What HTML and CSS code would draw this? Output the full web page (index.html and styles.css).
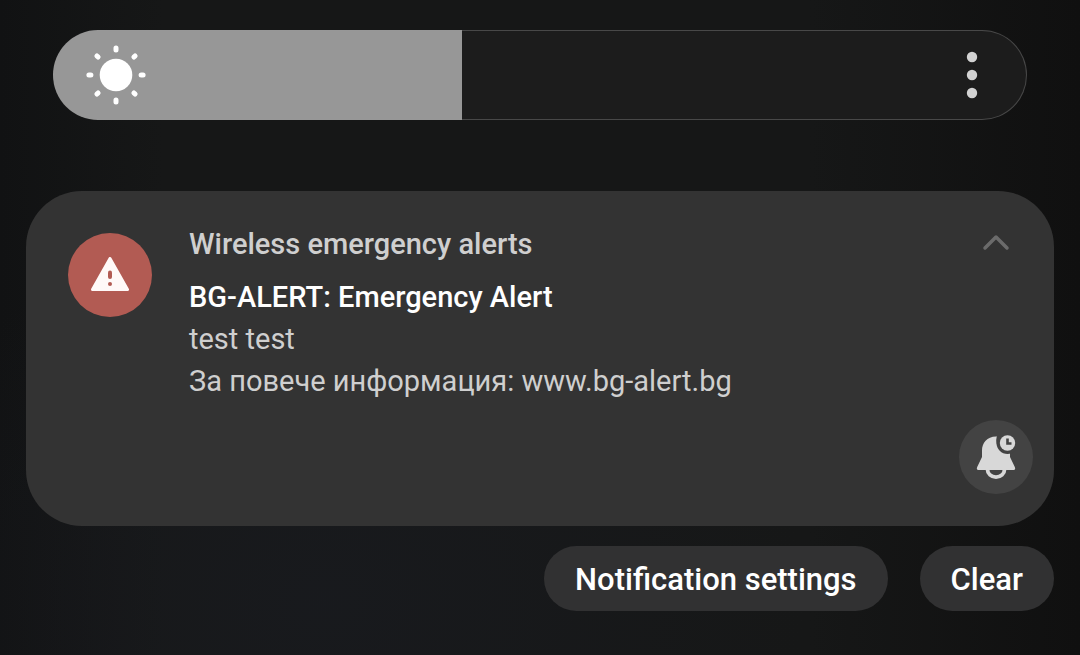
FILE: index.html
```html
<!DOCTYPE html>
<html lang="en">
<head>
  <meta charset="UTF-8">
  <meta name="viewport" content="width=device-width, initial-scale=1.0">
  <title>Notification panel</title>
  <link rel="stylesheet" href="styles.css">
</head>
<body>
  <main class="panel">
    <div class="brightness">
      <input type="range" class="brightness-slider" min="0" max="100" value="42" aria-label="Brightness">
      <svg class="sun-icon" width="60" height="60" viewBox="0 0 60 60" aria-hidden="true">
        <circle cx="30" cy="30" r="16.3" fill="#fff"/>
        <g stroke="#fff" stroke-width="5" stroke-linecap="round">
          <path d="M30 2.900v2M30 55.100v2M2.900 30h2M55.100 30h2"/>
          <path d="M10.900 10.900l1.200 1.200M47.900 47.900l1.200 1.200M10.900 49.100l1.200-1.200M47.900 12.100l1.200-1.200"/>
        </g>
      </svg>
      <button type="button" class="more-button" aria-label="More options">
        <svg width="12" height="48" viewBox="0 0 12 48" fill="#d2d2d2">
          <circle cx="6" cy="6" r="5.200"/>
          <circle cx="6" cy="24" r="5.200"/>
          <circle cx="6" cy="42" r="5.200"/>
        </svg>
      </button>
    </div>

    <article class="notification">
      <div class="app-icon">
        <svg width="40" height="36" viewBox="0 0 40 36" aria-hidden="true">
          <path d="M20 1.500L37.500 32.500H2.500Z" fill="#fff9f8" stroke="#fff9f8" stroke-width="3" stroke-linejoin="round"/>
          <path d="M20 15.500v4.500" stroke="#b25b53" stroke-width="4" stroke-linecap="round"/>
          <circle cx="20" cy="27" r="2" fill="#b25b53"/>
        </svg>
      </div>

      <div class="notification-text">
        <p class="app-name">Wireless emergency alerts</p>
        <h2 class="title">BG-ALERT: Emergency Alert</h2>
        <p class="message">test test</p>
        <p class="message" lang="bg">За повече информация: www.bg-alert.bg</p>
      </div>

      <button type="button" class="collapse-button" aria-label="Collapse">
        <svg width="28" height="18" viewBox="0 0 28 18" fill="none">
          <path d="M3 14L14 3L25 14" stroke="#6b6b6b" stroke-width="3.500" stroke-linecap="round" stroke-linejoin="round"/>
        </svg>
      </button>

      <button type="button" class="snooze-button" aria-label="Snooze">
        <svg width="40" height="46" viewBox="0 0 40 46">
          <path d="M20 2.500C11 2.500 6 9 6 16.500V23L1.200 33C.4 34.700.9 36 2.500 36H37.500C39.100 36 39.600 34.700 38.800 33L34 23V2.500Z" fill="#d8d8d8"/>
          <path d="M11.500 35.500a8.500 7.700 0 0 0 17 0" fill="none" stroke="#d8d8d8" stroke-width="3.800"/>
          <path d="M22 0H40V18H34A12 12 0 0 1 22 0Z" fill="#434343"/>
          <circle cx="31.500" cy="9" r="11" fill="#434343"/>
          <circle cx="31.500" cy="9" r="7.700" fill="#d8d8d8"/>
          <path d="M31.500 4.500V9.500H35.500" fill="none" stroke="#434343" stroke-width="2.600"/>
        </svg>
      </button>
    </article>

    <footer class="actions">
      <button type="button" class="pill">Notification settings</button>
      <button type="button" class="pill">Clear</button>
    </footer>
  </main>
</body>
</html>
```
FILE: styles.css
```css
* {
  box-sizing: border-box;
}

body {
  margin: 0;
  min-height: 100vh;
  font-family: Roboto, sans-serif;
  color: #fff;
  background:
    radial-gradient(ellipse at 30% 92%, rgba(25, 27, 32, 0.7), transparent 45%),
    linear-gradient(to right, #111213, #161717 15%, #161717 75%, #101010);
}

button {
  font-family: inherit;
  color: inherit;
  border: none;
  padding: 0;
  background: none;
  cursor: pointer;
}

svg {
  display: block;
}

.panel {
  padding: 30px 26px 44px;
}

/* Brightness bar */
.brightness {
  position: relative;
  margin: 0 27px 71px;
}

.brightness-slider {
  -webkit-appearance: none;
  appearance: none;
  display: block;
  width: 100%;
  height: 90px;
  margin: 0;
  border: 1px solid transparent;
  border-radius: 45px;
  /* the outline only shows on the unfilled part */
  background:
    linear-gradient(to right, #979797 42%, #1c1c1c 42%) padding-box,
    linear-gradient(to right, #979797 42%, #484848 42%) border-box;
}

.brightness-slider::-webkit-slider-thumb {
  -webkit-appearance: none;
  width: 1px;
  height: 88px;
}

.sun-icon {
  position: absolute;
  left: 33px;
  top: 15px;
  pointer-events: none;
}

.more-button {
  position: absolute;
  right: 49px;
  top: 21px;
}

/* Notification card */
.notification {
  display: grid;
  grid-template-columns: 84px 1fr 74px;
  row-gap: 18px;
  padding: 32px 21px 32px 42px;
  border-radius: 56px;
  background-color: #333333;
}

.app-icon {
  display: flex;
  align-items: center;
  justify-content: center;
  height: 84px;
  margin-top: 10px;
  border-radius: 50%;
  background-color: #b25b53;
}

.notification-text {
  padding-left: 37px;
  font-size: 29px;
  line-height: 42px;
  color: #cfcfcf;
}

.notification-text p,
.title {
  margin: 0;
}

.notification-text .app-name {
  margin-bottom: 11px;
  font-weight: 500;
}

.title {
  font-size: 29px;
  font-weight: 500;
  color: #fff;
}

.collapse-button {
  display: flex;
  align-items: center;
  justify-content: center;
  height: 40px;
}

.snooze-button {
  grid-column: 3;
  display: flex;
  align-items: center;
  justify-content: center;
  height: 74px;
  border-radius: 50%;
  background-color: #434343;
}

/* Footer buttons */
.actions {
  display: flex;
  justify-content: flex-end;
  gap: 32px;
  margin-top: 20px;
}

.pill {
  height: 65px;
  padding: 2px 31px 0;
  border-radius: 33px;
  font-size: 31px;
  font-weight: 500;
  background-color: #313132;
}
```
